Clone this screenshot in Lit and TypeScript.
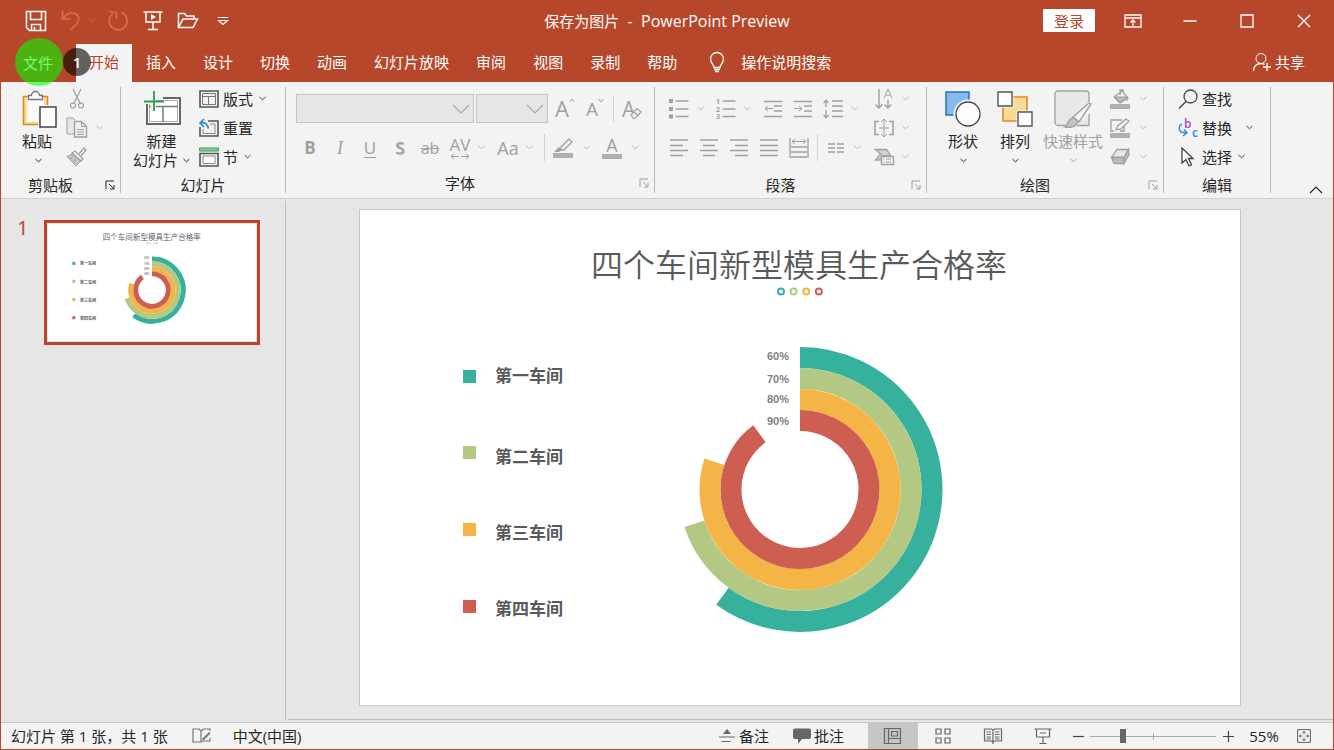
import { LitElement, html, svg, css } from "lit";
import { customElement, property, state } from "lit/decorators.js";
import { classMap } from "lit/directives/class-map.js";

const icon = (w: number, h: number, body: unknown) =>
  html`<svg width=${w} height=${h} viewBox="0 0 ${w} ${h}" fill="none" stroke="currentColor" aria-hidden="true">${body}</svg>`;

const chevron = () => icon(7, 5, svg`<path d="M.5 1 3.5 3.8 6.5 1"/>`);

/* Title bar */
const iSave = icon(22, 22, svg`<path d="M1.5 1.5h19v19h-16l-3-3z M5.5 1.5v8h11v-8 M6.5 20.500v-6h9v6 M9.500 20v-3" stroke-width="1.5"/>`);
const iUndo = icon(20, 22, svg`<path d="M1.500 1v8h8 M1.500 9C5 4 10 1.500 14 3.500c5 2.500 4.500 7.500 1 11l-6 6" stroke-width="1.700"/>`);
const iRedo = icon(22, 22, svg`<path d="M2.500 2h7v7 M14.500 2.600a9 9 0 1 1-8.500 1" stroke-width="1.700"/>`);
const iShow = icon(20, 22, svg`<path d="M.5 2h19 M3 2v10h14V2 M10 12v7 M5 19.500h10" stroke-width="1.500"/><path d="m8 4 5 3-5 3z" fill="currentColor" stroke="none"/>`);
const iOpen = icon(22, 18, svg`<path d="M1.500 15.500V1.500h6l2 2.500h7.500v3 M1.500 15.500 6 7h14.500l-4.500 8.500z" stroke-width="1.500"/>`);
const iMore = icon(12, 10, svg`<path d="M1 1.500h10 M1.500 4.500 6 8.500l4.500-4z" stroke-width="1.200"/>`);
const iPane = icon(18, 14, svg`<path d="M1 1h16v12H1z M1 4h16 M9 12V6 M6.500 8.500 9 6l2.500 2.500" stroke-width="1.300"/>`);
const iMin = icon(14, 14, svg`<path d="M.5 7h13" stroke-width="1.500"/>`);
const iMax = icon(14, 14, svg`<path d="M1 1h12v12H1z" stroke-width="1.300"/>`);
const iClose = icon(14, 14, svg`<path d="m1 1 12 12 M13 1 1 13" stroke-width="1.400"/>`);
const iLamp = icon(16, 22, svg`<path d="M5 16.500c0-3-3.500-4-3.500-8.500a6.500 6.500 0 0 1 13 0c0 4.500-3.500 5.500-3.500 8.500z M5 18.500h6 M6 20.500h4" stroke-width="1.300"/>`);
const iShare = icon(20, 20, svg`<circle cx="9" cy="6.500" r="5"/><path d="M1.500 19c0-4.500 3-7.500 7.500-7.500 1.500 0 2.500.3 3.500.8 M15 11v8 M11 15h8" stroke-width="1.300"/>`);

/* Clipboard */
const iPaste = icon(36, 40, svg`
  <path d="M1.500 7.500h24v28h-24z" fill="#fbdc94" stroke="#e08a1e" stroke-width="1.600"/>
  <path d="M5 9h17v24H5z" fill="#fafafa" stroke="none"/>
  <path d="M6.500 10.500V6.500h3a4 4 0 0 1 8 0h3v4z" fill="#fff" stroke="#777" stroke-width="1.300"/>
  <path d="M16 16h20v24H16z" fill="#f3f3f3" stroke="none"/><path d="M18 18h16v20H18z" fill="#fff" stroke="#444" stroke-width="1.500"/>`);
const iCut = icon(20, 22, svg`<path d="m6 1 7.500 15 M14 1 6.500 16" stroke-width="1.300"/><circle cx="6" cy="17.500" r="2.500" stroke-width="1.200"/><circle cx="14" cy="17.500" r="2.500" stroke-width="1.200"/>`);
const iCopy = icon(22, 22, svg`<path d="M8 17H1V1h6l2 2" fill="#e8e8e8"/><path d="M8.500 4.500h7l5 5V20h-12z" fill="#f0f0f0" stroke-width="1.400"/><path d="M15.500 4.500v5h5 M11 12.500h7 M11 15h7 M11 17.500h7"/>`);
const iBrush = icon(22, 20, svg`<path d="m13 7 5-6 2 2-5 6" stroke-width="1.300"/><path d="m9 4 8 8-2 2-9-8z" fill="#f3f3f3" stroke-width="1.300"/><path d="M6 7 1 9.500 10 19l4.500-5z" fill="#c4c4c4"/><path d="m4 12 3-2 M7 15l3-2.500"/>`);

/* Slides */
const iNew = icon(40, 38, svg`
  <path d="M5 8h33v26H5z" fill="#fff" stroke="#666" stroke-width="2"/>
  <path d="M7.500 10.500h28v21h-28z" stroke="#aaa"/><path d="M7 16.500h29 M21 16.500V32" stroke="#777" stroke-width="1.500"/>
  <path d="M3 6h18v4h-7v11H9V14H3z" fill="#f3f3f3" stroke="none"/>
  <path d="M12 1v20 M2 11.500h20" stroke="#2f9e4b" stroke-width="1.800"/>`);
const iLayout = icon(20, 18, svg`<path d="M1 1h18v16H1z" stroke="#555" stroke-width="1.600"/><path d="M3.500 3.500h13v11h-13z M3.500 6.500h13 M9.500 6.500v8" stroke="#777"/>`);
const iReset = icon(20, 20, svg`<path d="M9 3h10v15H1V9" stroke="#555" stroke-width="1.600"/><path d="M11 6h5v9.500H4V11" stroke="#888"/><path d="M5 1 1 5l4 4 M1.500 5c4-1 7 .5 8 5.500" stroke="#2a8dd4" stroke-width="1.700"/>`);
const iSection = icon(20, 20, svg`<path d="M.5 1h19v3H.5z" fill="#8fca9b" stroke="#3f9c57"/><path d="M1 6.500h18V19H1z" stroke="#555" stroke-width="1.600"/><path d="M4 9h12v7.500H4z" fill="#fff" stroke="#888"/>`);

/* Font */
const iSelect = icon(18, 10, svg`<path d="m1 1 8 8 8-8" stroke-width="1.200"/>`);
const iUp = icon(6, 5, svg`<path d="m.5 4 2.500-3 2.500 3"/>`);
const iDown = icon(6, 5, svg`<path d="m.5 1 2.500 3L5.500 1"/>`);
const iEraser = icon(12, 12, svg`<path d="m1 8 6-6.500 4 3.500-6 6.500H3.500z M4 5l4 3.500" fill="#f3f3f3" stroke-width="1.200"/>`);
const iSpacing = icon(20, 7, svg`<path d="M1 3.500h8 M11 3.500h8 M4 .8 1 3.500l3 2.700 M16 .8l3 2.700-3 2.700"/>`);
const iMarker = icon(20, 20, svg`<path d="m8 9 8-8 3 3-8 8H7.500z" stroke-width="1.300"/><path d="m6 9 3 3-3 2H1z" fill="currentColor" stroke="none"/><path d="M0 15h20v5H0z" fill="#b0b0b0" stroke="none"/>`);

/* Paragraph */
const iBullets = icon(20, 20, svg`<path d="M6.500 2h13 M6.500 10h13 M6.500 17.500h13" stroke-width="1.500"/><path d="M0 0h4v4H0z M0 8h4v4H0z M0 15.500h4v4H0z" fill="currentColor" stroke="none"/>`);
const iNumbers = icon(20, 20, svg`<path d="M6.500 2h13 M6.500 10h13 M6.500 17.500h13" stroke-width="1.500"/><g class="tiny" fill="currentColor" stroke="none"><text x="0" y="5">1</text><text x="0" y="13">2</text><text x="0" y="20">3</text></g>`);
const iOutdent = icon(18, 18, svg`<path d="M0 1.500h18 M10 6h8 M10 11h8 M0 16.500h18" stroke-width="1.500"/><path d="M1 8.500h8 M4 6 1 8.500 4 11"/>`);
const iIndent = icon(18, 18, svg`<path d="M0 1.500h18 M10 6h8 M10 11h8 M0 16.500h18" stroke-width="1.500"/><path d="M0 8.500h8 M5 6l3 2.500L5 11"/>`);
const iLines = icon(20, 20, svg`<path d="M9 2h11 M9 7h11 M9 12h11 M9 17.500h11" stroke-width="1.500"/><path d="M3 1v7 M.5 4 3 1.200 5.500 4 M3 11v8 M.5 16 3 18.800 5.500 16" stroke-width="1.300"/>`);
const bars = (a: number, b: number) => icon(18, 18, svg`<path d="M0 1h18 M0 11.500h18" stroke-width="1.500"/><path d="M${a} 6.500H${b} M${a} 16.500H${b}" stroke-width="1.500"/>`);
const iDistribute = icon(20, 22, svg`<path d="M1 1v20 M19 1v20 M2 10h16 M2 15h16 M2 20h16" stroke-width="1.300"/><path d="M3 4.500h14 M6 2 3 4.500 6 7 M14 2l3 2.500L14 7"/>`);
const iColumns = icon(16, 10, svg`<path d="M0 1h7 M0 5h7 M0 9h7 M9 1h7 M9 5h7 M9 9h7" stroke-width="1.300"/>`);
const iDirection = icon(20, 22, svg`<path d="M5 1v19 M1.500 16.500 5 20l3.500-3.500 M14 12v8 M10.500 16.500 14 20l3.500-3.500" stroke-width="1.400"/><path d="m10 10 4-9 4 9 M11.500 7h5"/>`);
const iAlign = icon(20, 20, svg`<path d="M5 3.500H1v13h4 M15 3.500h4v13h-4" stroke-width="1.500"/><path d="M10 1v18 M7 4l3-3 3 3 M7 16l3 3 3-3 M5 10h10"/>`);
const iSmart = icon(20, 18, svg`<path d="m1.500 1.500 5 4.500-5 6h6V8h9.500l-4.500-6.500z" fill="#cfcfcf" stroke-width="1.300"/><path d="M7.500 8.500h12v8h-12z" fill="#f3f3f3" stroke-width="1.400"/><path d="M9.500 11h1 M12 11h5 M9.500 14h1 M12 14h5"/>`);

/* Drawing */
const iShapes = icon(38, 38, svg`<path d="M2 2h23v23H2z" fill="#84bbea" stroke="#1d74c4" stroke-width="1.500"/><circle cx="24" cy="24" r="13" fill="#fff" stroke="#f3f3f3" stroke-width="3"/><circle cx="24" cy="24" r="12" fill="#fdfdfd" stroke="#444" stroke-width="1.300"/>`);
const iArrange = icon(38, 38, svg`<path d="M7 7h24v24H7z" fill="#f9dc93" stroke="#e38a26" stroke-width="1.600"/><path d="M.5.5h17v17H.5z M20.500 20.500h17v17h-17z" fill="#f3f3f3" stroke="none"/><path d="M2 2h14v14H2z M22 22h14v14H22z" fill="#fdfdfd" stroke="#555" stroke-width="1.400"/>`);
const iStyles = icon(40, 40, svg`<path d="M14 36.500H5a3 3 0 0 1-3-3V5a3 3 0 0 1 3-3h28a3 3 0 0 1 3 3v8 M36 25v11.500H24" fill="#e8e8e8" stroke-width="1.300"/><path d="M20 28 36 14l2 1-12 18z" fill="#f3f3f3" stroke-width="1.400"/><path d="M12 38c3-1 2-7 7-9 3-.5 6 2 5 5-1 4-7 5-12 4z" fill="#c4c4c4" stroke-width="1.300"/>`);
const iFill = icon(20, 20, svg`<path d="m4 8 8-6 6 7-8 5z M10 6V1h3v3" stroke-width="1.300"/><path d="M17 7v5 M5 8h12l-7 5z" fill="#bbb"/><path d="M0 15h20v5H0z" fill="#b0b0b0" stroke="none"/>`);
const iOutline = icon(20, 20, svg`<path d="M12 2H1v11h3 M14 8v5h-4 M6 12l1.500-4L16 1l3 2-8 8z" stroke-width="1.300"/><path d="M0 15h20v5H0z" fill="#b0b0b0" stroke="none"/>`);
const iEffects = icon(20, 18, svg`<path d="M7 1.500h11.500L14 9.500H1.500z" fill="#e6e6e6" stroke-width="1.300"/><path d="M1.500 9.500H14v6H4z M14 9.500l4.500-8 .5 5-5 9z" fill="#bbb" stroke-width="1.300"/>`);

/* Editing */
const iFind = icon(20, 20, svg`<circle cx="12.500" cy="7.500" r="6.500" stroke="#444" stroke-width="1.300"/><path d="m8 12.500-7 7" stroke="#444" stroke-width="1.500"/>`);
const iReplace = icon(20, 22, svg`<path d="M4 7c-3 1-4 5-1 8l5 1 M6 12.500l3 3.500-4 3" stroke="#2a8dd4" stroke-width="1.400"/><g class="letters" stroke="none"><text x="6" y="11" fill="#b04bc0">b</text><text x="14" y="20" fill="#2a8dd4">c</text></g>`);
const iPointer = icon(20, 20, svg`<path d="M4 1v15l4-3.500 3 6.500 2.500-1.200-3-6.300H15z" fill="#fff" stroke="#444" stroke-width="1.300"/>`);
const iLaunch = icon(10, 10, svg`<path d="M1 9V1h8 M4 4l4.500 4.500 M9 5v4H5"/>`);
const iCollapse = icon(14, 8, svg`<path d="m1 7 6-6 6 6" stroke-width="1.200"/>`);

/* Status bar */
const iProof = icon(20, 16, svg`<path d="M9 14V3L7 1H1v13h8l2-1h7v-3 M9 3l2-2h7v2" stroke-width="1.200"/><path d="m10 11 7-7 1.500 1.500-7 7z" fill="#777" stroke="none"/>`);
const iNotes = icon(16, 14, svg`<path d="m4 5 4-5 4 5z" fill="currentColor" stroke="none"/><path d="M0 8h16 M2.500 12.500h9" stroke-width="1.200"/>`);
const iComment = icon(18, 16, svg`<path d="M2 .5h14a2 2 0 0 1 2 2V9a2 2 0 0 1-2 2H9l-4 5v-5H2a2 2 0 0 1-2-2V2.500a2 2 0 0 1 2-2z" fill="currentColor" stroke="none"/>`);
const iNormal = icon(18, 16, svg`<path d="M.5.5h16v15H.5z M4.500.5v15 M4.500 10.500h12 M7.500 3.500h6v4.500h-6z" stroke-width="1.200"/>`);
const iSorter = icon(16, 16, svg`<path d="M1 1h5v5H1z M10 1h5v5h-5z M1 10h5v5H1z M10 10h5v5h-5z" stroke-width="1.200"/>`);
const iReading = icon(18, 16, svg`<path d="M9 14 7.500 13H.5V1h7L9 2l1.500-1h7v12h-7z M9 2v14" stroke-width="1.200"/><path d="M2.500 4H7 M2.500 6.500H7 M2.500 9H7 M11 4h4.500 M11 6.500h4.500 M11 9h4.500 M2.500 11H7 M11 11h4.500"/>`);
const iSlideshow = icon(18, 16, svg`<path d="M.5 1h17 M2.500 1v8h13V1 M9 9v6 M5.500 15.500h7 M6 5h6" stroke-width="1.200"/>`);
const iFit = icon(14, 14, svg`<path d="M.6.600h12.800v12.800H.6z"/><path d="M7 2.500v3 M7 8.500v3 M2.500 7h3 M8.500 7h3 M5.500 3.500 7 2.500l1.500 1 M5.500 10.500 7 11.500l1.500-1 M3.500 5.500 2.500 7l1 1.500 M10.500 5.500 11.500 7l-1 1.500"/>`);

const SERIES = [
  { name: "第一车间", value: 60, color: "#36b19e", mark: 160, label: 172, pct: 150 },
  { name: "第二车间", value: 70, color: "#b3c983", mark: 236, label: 253, pct: 173 },
  { name: "第三车间", value: 80, color: "#f4b446", mark: 313, label: 329, pct: 193 },
  { name: "第四车间", value: 90, color: "#ce5e51", mark: 390, label: 405, pct: 215 },
];

/** A slide drawn on an 880 × 495 canvas, at whatever width its container gives. */
@customElement("slide-view")
export class SlideView extends LitElement {
  static styles = css`
    :host { display: block; background: #fff; }
    svg { display: block; width: 100%; height: auto; }
    .title { font: 350 32px/1 "Noto Sans CJK SC DemiLight", "Noto Sans CJK SC", sans-serif; fill: #595959; text-anchor: middle; }
    .name { font: 700 17px/1 "Noto Sans CJK SC", sans-serif; fill: #595959; }
    .pct { font: 700 11px/1 "Liberation Sans", sans-serif; fill: #7f7f7f; text-anchor: end; }
  `;

  private arc(value: number, r: number) {
    const a = (value / 100) * 2 * Math.PI;
    const x = 440 + r * Math.sin(a);
    const y = 279.5 - r * Math.cos(a);
    return `M440 ${279.5 - r}A${r} ${r} 0 1 1 ${x} ${y}`;
  }

  render() {
    return html`<svg viewBox="0 0 880 495" role="img" aria-label="四个车间新型模具生产合格率">
      <text class="title" x="439" y="67">四个车间新型模具生产合格率</text>
      ${SERIES.map((s, i) => svg`
        <circle cx=${421 + i * 12.6} cy="81.500" r="3" fill="none" stroke=${s.color} stroke-width="2"/>
        <rect x="103" y=${s.mark} width="13" height="13" fill=${s.color}/>
        <text class="name" x="135" y=${s.label}>${s.name}</text>
        <text class="pct" x="429" y=${s.pct}>${s.value}%</text>
        <path d=${this.arc(s.value, 132 - i * 21)} fill="none" stroke=${s.color} stroke-width="21"/>`)}
    </svg>`;
  }
}

@customElement("app-root")
export class AppRoot extends LitElement {
  @state() private tab = "开始";
  @property({ type: Number }) zoom = 55;

  static styles = css`
    :host {
      display: flex; flex-direction: column; box-sizing: border-box; min-height: 100vh;
      border: 1px solid #b7472a; border-top: 0; background: #e6e6e6; color: #262626;
      font: 15px/20px "Open Sans", "Noto Sans CJK SC", sans-serif;
    }
    *, *::before, *::after { box-sizing: border-box; }
    svg { display: block; flex: none; overflow: visible; }
    button { font: inherit; color: inherit; background: none; border: 0; padding: 0; margin: 0; display: flex; align-items: center; justify-content: center; white-space: nowrap; }
    button:disabled { color: #a0a0a0; }

    .head { background: #b7472a; color: #fff; }
    .titlebar { display: grid; grid-template-columns: 1fr auto 1fr; align-items: center; height: 44px; padding-bottom: 3px; }
    .qat { display: flex; align-items: center; padding-left: 24px; }
    .qat .dim { color: #e0694d; }
    .save { margin-right: 14px; }
    .undo { margin-right: 8px; }
    .undo-menu { margin-right: 11px; }
    .redo { margin-right: 14px; }
    .show { margin-right: 14px; }
    .open { margin-right: 18px; }
    .doc { white-space: pre; }
    .doc span { font-size: 16px; }
    .window { display: flex; justify-content: flex-end; align-items: center; padding-right: 1px; }
    .signin { background: #fff; color: #b7472a; width: 52px; height: 23px; border-radius: 1px; margin-right: 9px; }
    .window .wide { width: 57px; height: 40px; }

    .tabs { display: flex; align-items: stretch; height: 38px; gap: 1px; position: relative; }
    .tabs button { padding-bottom: 2px; }
    .tab { padding: 0 13px; }
    .tab.file { padding: 0 22px; }
    .tab.active { background: #f3f3f3; color: #b7472a; }
    .tell { gap: 16px; margin-left: 18px; }
    .share { margin-left: auto; padding-right: 28px; gap: 3px; }
    .pulse, .step { position: absolute; border-radius: 50%; pointer-events: none; }
    .pulse { left: 14px; top: -6px; width: 48px; height: 48px; background: rgb(0 255 0 / 58%); }
    .step { left: 62px; top: 4px; width: 28px; height: 28px; background: rgb(0 0 0 / 60%); font-weight: 600; text-align: center; line-height: 28px; }

    .ribbon { display: flex; background: #f3f3f3; height: 117px; border-bottom: 1px solid #d2d2d2; }
    .group { display: flex; flex-direction: column; padding-top: 2px; }
    .rule { width: 1px; margin: 5px 0; background: #b8b8b8; }
    .body { display: flex; height: 87px; }
    .caption { display: flex; align-items: center; height: 30px; }
    .caption span { flex: 1; text-align: center; }
    .caption button { width: 20px; height: 20px; }
    .col { display: flex; flex-direction: column; }
    .line { display: flex; align-items: center; height: 29px; }
    .line button { gap: 4px; height: 26px; }
    .cv { width: 12px; flex: none; }
    .line .cv, .row .cv { color: #444; }
    .line .cv:disabled, .row .cv:disabled { color: #b4b4b4; }
    .ib { width: 30px; height: 28px; flex: none; }
    .big { flex-direction: column; justify-content: flex-start; padding-top: 5px; line-height: 19px; }
    .big .art { height: 40px; margin-bottom: 3px; display: flex; justify-content: center; align-items: center; }
    .big .sub { display: flex; align-items: center; gap: 5px; height: 19px; }
    .big svg { stroke-width: 1; }
    .clip { padding: 0 15px 0 11px; }
    .clip .big { width: 48px; align-items: flex-start; padding-left: 10px; }
    .clip .big .sub { padding-left: 13px; }
    .clip .line .cv { margin-left: 1px; }
    .clip .col { margin-left: 2px; }
    .slides { padding: 0 17px 0 12px; }
    .slides .big { width: 57px; margin-right: 9px; }
    .slides .cv { margin-left: 3px; }
    .fields { padding: 5px 0 0 9px; }
    .row { display: flex; align-items: center; height: 39px; }
    .thin { width: 1px; height: 27px; background: #d0d0d0; margin: 0 3px; }
    .pickers { padding-left: 1px; }
    .combo { display: grid; align-items: center; color: #a8a8a8; margin-right: 2px; }
    .combo > * { grid-area: 1 / 1; }
    .combo svg { justify-self: end; margin-right: 4px; pointer-events: none; }
    .combo select { appearance: none; width: 178px; height: 29px; border: 1px solid #c4c4c4; background: #e6e6e6; border-radius: 0; margin: 0; font: inherit; opacity: 1; }
    .combo.size select { width: 72px; }
    .fonts .ib { font-size: 17px; color: #a0a0a0; }
    .bold { font-weight: 700; }
    .fonts .italic { font-family: "Liberation Serif", serif; font-style: italic; font-size: 18px; }
    .under { text-decoration: underline; text-underline-offset: 3px; }
    .shadow { font-weight: 600; text-shadow: 1px 1px 1px #bbb; }
    .strike { text-decoration: line-through; }
    .fonts .strike { font-size: 16px; }
    .fonts .grow { font-size: 22px; align-items: flex-start; line-height: 26px; }
    .fonts .shrink { font-size: 19px; align-items: flex-start; line-height: 28px; }
    .grow svg, .shrink svg { margin-top: 3px; }
    .fonts .clear { font-size: 21px; }
    .clear svg { margin: 9px 0 0 -5px; }
    .fonts .track { flex-direction: column; line-height: 17px; }
    .fonts .tint { flex-direction: column; line-height: 17px; font-size: 18px; margin-left: 5px; }
    .tint i { width: 20px; height: 5px; background: #b0b0b0; }
    .fonts .caps { font-size: 18px; margin-left: 6px; }
    .fonts .thin.gap-l { margin-left: 9px; }
    .fonts .thin ~ .cv { margin-left: 2px; }
    .gap-s { margin-left: 5px; }
    .fonts { padding-right: 7px; }
    .para { padding: 0 15px 0 0; }
    .para .col:last-child { margin-left: 6px; }
    .tiny { font: 700 7px "Open Sans", sans-serif; }
    .letters { font: 600 12px "Open Sans", sans-serif; }
    .draw { padding: 0 14px 0 10px; }
    .draw .big { width: 52px; }
    .draw .big.styles { width: 64px; }
    .draw .line .cv { margin-left: 2px; }
    .edit { padding: 0 15px 0 14px; }
    .edit .find .cv { margin-left: 11px; }
    .edit .pick .cv { margin-left: 3px; }
    .collapse { margin: auto 7px 0 auto; width: 20px; height: 16px; }

    .work { flex: 1; display: flex; min-height: 0; padding: 2px 0 2px; }
    .thumbs { width: 285px; border-right: 1px solid #bdbdbd; display: flex; align-items: flex-start; padding: 19px 25px 0 16px; flex: none; }
    .num { width: 27px; color: #c8482c; font: 20px/16px "Noto Sans", sans-serif; }
    .thumb { flex: 1; border: 3px solid #b7472a; padding: 0; background: #fff; display: block; }
    .thumb slide-view { border: 1px solid #e0e0e0; }
    .stage { flex: 1; margin-left: 2px; border-bottom: 1px solid #bdbdbd; padding: 8px 92px 13px 71px; }
    .stage slide-view { border: 1px solid #c6c6c6; }

    .status { display: flex; align-items: center; height: 27px; background: #f3f3f3; border-top: 1px solid #c6c6c6; padding-left: 10px; }
    .status .proof { margin: 0 21px 0 24px; color: #777; }
    .right { margin-left: auto; display: flex; align-items: center; align-self: stretch; color: #666; }
    .right button { align-self: stretch; gap: 4px; }
    .right b { font-weight: 400; color: #262626; }
    .notes { margin-right: 24px; }
    .comments { margin-right: 24px; }
    .comments b { margin-left: -1px; }
    .view { width: 50px; }
    .view.active { background: #c6c6c6; }
    .step-btn { width: 16px; color: #444; }
    .step-btn.out { margin-left: 2px; }
    .slider { appearance: none; width: 126px; height: 20px; margin: 0 4px;
      background: linear-gradient(#aaa, #aaa) center / 100% 1px no-repeat, linear-gradient(#aaa, #aaa) center / 1px 7px no-repeat; }
    .slider::-webkit-slider-thumb { appearance: none; width: 6px; height: 14px; background: #666; border: 0; border-radius: 0; }
    .pct { width: 56px; text-align: center; color: #262626; }
    .fit { margin-right: 17px; width: 24px; }
  `;

  private cv(label: string, off = false) {
    return html`<button class="cv" aria-label=${label} ?disabled=${off}>${chevron()}</button>`;
  }

  private ib(label: string, art: unknown, cls = "") {
    return html`<button class="ib ${cls}" aria-label=${label} disabled>${art}</button>`;
  }

  private caption(text: string, launcher: "" | "on" | "off" = "") {
    return html`<div class="caption"><span>${text}</span>${launcher
      ? html`<button aria-label="${text}选项" ?disabled=${launcher === "off"}>${iLaunch}</button>` : ""}</div>`;
  }

  private renderHead() {
    const tabs = ["文件", "开始", "插入", "设计", "切换", "动画", "幻灯片放映", "审阅", "视图", "录制", "帮助"];
    return html`<header class="head">
      <div class="titlebar">
        <div class="qat">
          <button class="save" aria-label="保存">${iSave}</button>
          <button class="undo dim" aria-label="撤消">${iUndo}</button>
          <button class="undo-menu dim" aria-label="撤消列表">${chevron()}</button>
          <button class="redo dim" aria-label="重复">${iRedo}</button>
          <button class="show" aria-label="从头开始">${iShow}</button>
          <button class="open" aria-label="打开">${iOpen}</button>
          <button aria-label="自定义快速访问工具栏">${iMore}</button>
        </div>
        <div class="doc">保存为图片<span>  -  PowerPoint Preview</span></div>
        <div class="window">
          <button class="signin">登录</button>
          <button class="wide" aria-label="功能区显示选项">${iPane}</button>
          <button class="wide" aria-label="最小化">${iMin}</button>
          <button class="wide" aria-label="最大化">${iMax}</button>
          <button class="wide" aria-label="关闭">${iClose}</button>
        </div>
      </div>
      <nav class="tabs">
        ${tabs.map((t) => html`<button class=${classMap({ tab: true, file: t === "文件", active: t === this.tab })}
          @click=${() => { if (t !== "文件") this.tab = t; }}>${t}</button>`)}
        <button class="tell">${iLamp}操作说明搜索</button>
        <button class="share">${iShare}共享</button>
        <span class="pulse"></span><span class="step">1</span>
      </nav>
    </header>`;
  }

  private renderRibbon() {
    return html`<section class="ribbon">
      <div class="group">
        <div class="body clip">
          <button class="big"><span class="art">${iPaste}</span>粘贴<span class="sub">${chevron()}</span></button>
          <div class="col">
            <div class="line">${this.ib("剪切", iCut)}</div>
            <div class="line">${this.ib("复制", iCopy)}${this.cv("复制选项", true)}</div>
            <div class="line">${this.ib("格式刷", iBrush)}</div>
          </div>
        </div>
        ${this.caption("剪贴板", "on")}
      </div>
      <div class="rule"></div>
      <div class="group">
        <div class="body slides">
          <button class="big"><span class="art">${iNew}</span>新建<span class="sub">幻灯片${chevron()}</span></button>
          <div class="col">
            <div class="line"><button>${iLayout}版式</button>${this.cv("版式选项")}</div>
            <div class="line"><button>${iReset}重置</button></div>
            <div class="line"><button>${iSection}节</button>${this.cv("节选项")}</div>
          </div>
        </div>
        ${this.caption("幻灯片")}
      </div>
      <div class="rule"></div>
      <div class="group">
        <div class="body fonts"><div class="fields">
          <div class="row pickers">
            <label class="combo"><select aria-label="字体" disabled><option></option></select>${iSelect}</label>
            <label class="combo size"><select aria-label="字号" disabled><option></option></select>${iSelect}</label>
            ${this.ib("增大字号", html`A${iUp}`, "grow")}
            ${this.ib("减小字号", html`A${iDown}`, "shrink")}
            <span class="thin"></span>
            ${this.ib("清除格式", html`A${iEraser}`, "clear")}
          </div>
          <div class="row">
            ${this.ib("加粗", "B", "bold")}${this.ib("倾斜", "I", "italic")}${this.ib("下划线", "U", "under")}
            ${this.ib("阴影", "S", "shadow")}${this.ib("删除线", "ab", "strike")}
            ${this.ib("字符间距", html`AV${iSpacing}`, "track")}${this.cv("字符间距选项", true)}
            ${this.ib("更改大小写", "Aa", "caps")}${this.cv("大小写选项", true)}
            <span class="thin gap-l"></span>
            ${this.ib("突出显示", iMarker)}${this.cv("突出显示颜色", true)}
            ${this.ib("字体颜色", html`A<i></i>`, "tint")}${this.cv("字体颜色选项", true)}
          </div>
        </div></div>
        ${this.caption("字体", "off")}
      </div>
      <div class="rule"></div>
      <div class="group">
        <div class="body para">
          <div class="fields">
            <div class="row">
              ${this.ib("项目符号", iBullets)}${this.cv("项目符号选项", true)}
              ${this.ib("编号", iNumbers, "gap-s")}${this.cv("编号选项", true)}
              ${this.ib("减少缩进", iOutdent, "gap-s")}${this.ib("增加缩进", iIndent)}
              ${this.ib("行距", iLines)}${this.cv("行距选项", true)}
            </div>
            <div class="row">
              ${this.ib("左对齐", bars(0, 13))}${this.ib("居中", bars(3, 15))}${this.ib("右对齐", bars(5, 18))}
              ${this.ib("两端对齐", bars(0, 18))}${this.ib("分散对齐", iDistribute)}
              <span class="thin"></span>${this.ib("分栏", iColumns)}${this.cv("分栏选项", true)}
            </div>
          </div>
          <div class="col">
            <div class="line">${this.ib("文字方向", iDirection)}${this.cv("文字方向选项", true)}</div>
            <div class="line">${this.ib("对齐文本", iAlign)}${this.cv("对齐文本选项", true)}</div>
            <div class="line">${this.ib("转换为 SmartArt", iSmart)}${this.cv("SmartArt 选项", true)}</div>
          </div>
        </div>
        ${this.caption("段落", "off")}
      </div>
      <div class="rule"></div>
      <div class="group">
        <div class="body draw">
          <button class="big"><span class="art">${iShapes}</span>形状<span class="sub">${chevron()}</span></button>
          <button class="big"><span class="art">${iArrange}</span>排列<span class="sub">${chevron()}</span></button>
          <button class="big styles" disabled><span class="art">${iStyles}</span>快速样式<span class="sub">${chevron()}</span></button>
          <div class="col">
            <div class="line">${this.ib("形状填充", iFill)}${this.cv("填充选项", true)}</div>
            <div class="line">${this.ib("形状轮廓", iOutline)}${this.cv("轮廓选项", true)}</div>
            <div class="line">${this.ib("形状效果", iEffects)}${this.cv("效果选项", true)}</div>
          </div>
        </div>
        ${this.caption("绘图", "off")}
      </div>
      <div class="rule"></div>
      <div class="group">
        <div class="body edit"><div class="col">
          <div class="line"><button>${iFind}查找</button></div>
          <div class="line find"><button>${iReplace}替换</button>${this.cv("替换选项")}</div>
          <div class="line pick"><button>${iPointer}选择</button>${this.cv("选择选项")}</div>
        </div></div>
        ${this.caption("编辑")}
      </div>
      <div class="rule"></div>
      <button class="collapse" aria-label="折叠功能区">${iCollapse}</button>
    </section>`;
  }

  render() {
    return html`${this.renderHead()}${this.renderRibbon()}
      <main class="work">
        <aside class="thumbs"><span class="num">1</span><button class="thumb" aria-label="幻灯片 1"><slide-view></slide-view></button></aside>
        <div class="stage"><slide-view></slide-view></div>
      </main>
      <footer class="status">
        <span>幻灯片 第 1 张，共 1 张</span>
        <button class="proof" aria-label="校对">${iProof}</button>
        <span>中文(中国)</span>
        <div class="right">
          <button class="notes">${iNotes}<b>备注</b></button>
          <button class="comments">${iComment}<b>批注</b></button>
          <button class="view active" aria-label="普通视图">${iNormal}</button>
          <button class="view" aria-label="幻灯片浏览">${iSorter}</button>
          <button class="view" aria-label="阅读视图">${iReading}</button>
          <button class="view" aria-label="幻灯片放映">${iSlideshow}</button>
          <button class="step-btn out" aria-label="缩小">${icon(11, 11, svg`<path d="M0 5.500h11" stroke-width="1.200"/>`)}</button>
          <input class="slider" type="range" aria-label="缩放" min="0" max="100" value="25">
          <button class="step-btn" aria-label="放大">${icon(11, 11, svg`<path d="M0 5.500h11 M5.500 0v11" stroke-width="1.200"/>`)}</button>
          <span class="pct">${this.zoom}%</span>
          <button class="fit" aria-label="适应窗口">${iFit}</button>
        </div>
      </footer>`;
  }
}
